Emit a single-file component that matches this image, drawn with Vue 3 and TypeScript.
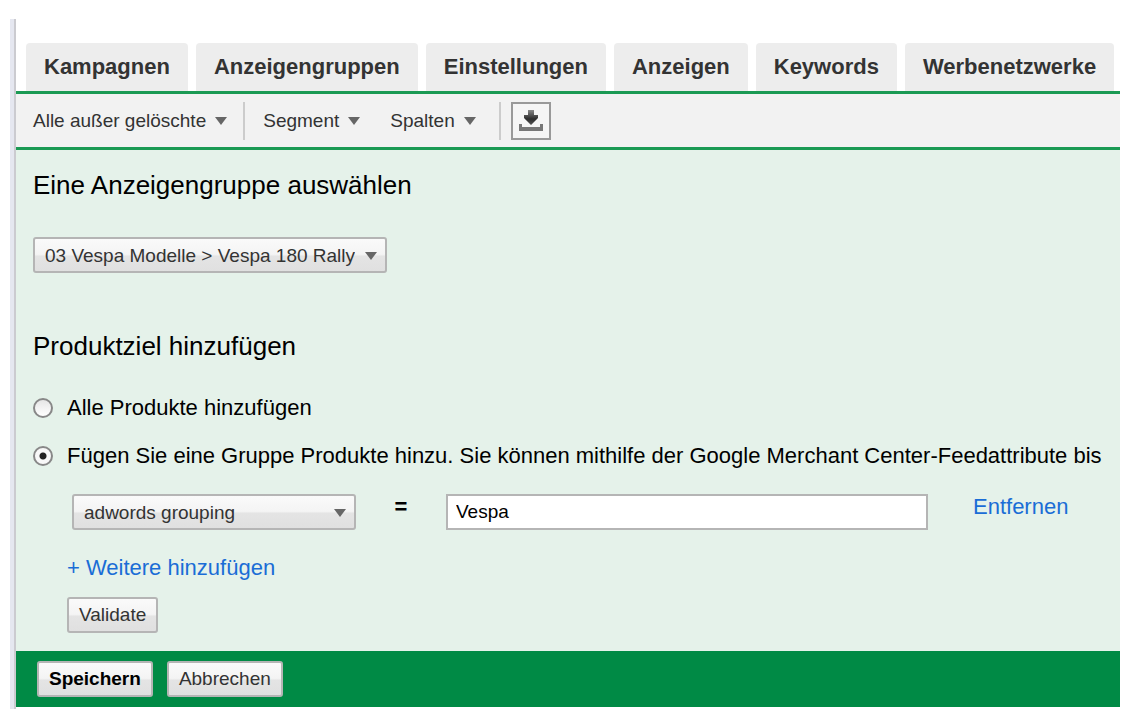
<script setup lang="ts">
import { ref } from 'vue'

const tabs: string[] = ['Kampagnen', 'Anzeigengruppen', 'Einstellungen', 'Anzeigen', 'Keywords', 'Werbenetzwerke']
const filters: string[] = ['Alle außer gelöschte', 'Segment', 'Spalten']
const scope = ref<'all' | 'group'>('group')
const adGroup = ref('03 Vespa Modelle > Vespa 180 Rally')
const attribute = ref('adwords grouping')
const attributeValue = ref('Vespa')
</script>

<template>
  <main class="frame">
    <nav class="tabs" aria-label="Kampagnenbereiche">
      <button v-for="tab in tabs" :key="tab" type="button" class="tab">{{ tab }}</button>
    </nav>

    <div class="toolbar">
      <button v-for="(item, i) in filters" :key="item" type="button" class="menu" :class="{ divided: i !== 1 }">
        {{ item }}<span class="caret"></span>
      </button>
      <button type="button" class="download" aria-label="Herunterladen">
        <svg width="26" height="24" viewBox="0 0 26 24" aria-hidden="true">
          <defs>
            <linearGradient id="arrowFill" x1="0" y1="0" x2="0" y2="1">
              <stop offset="0" stop-color="#888" />
              <stop offset="0.6" stop-color="#2c2c2c" />
              <stop offset="1" stop-color="#555" />
            </linearGradient>
          </defs>
          <path d="M10 1h6v5h4v3l-7 7-7-7V6h4z" fill="url(#arrowFill)" />
          <path d="M1 15h3v3h18v-3h3v7H1z" fill="#777" />
        </svg>
      </button>
    </div>

    <form class="panel" @submit.prevent>
      <div class="content">
        <h2><label for="adgroup">Eine Anzeigengruppe auswählen</label></h2>
        <div class="select group-select">
          <select id="adgroup" v-model="adGroup">
            <option>03 Vespa Modelle &gt; Vespa 180 Rally</option>
          </select>
        </div>

        <h2>Produktziel hinzufügen</h2>
        <div class="choices">
          <label class="choice">
            <input v-model="scope" type="radio" name="scope" value="all" />
            <span>Alle Produkte hinzufügen</span>
          </label>
          <label class="choice">
            <input v-model="scope" type="radio" name="scope" value="group" />
            <span>Fügen Sie eine Gruppe Produkte hinzu. Sie können mithilfe der Google Merchant Center-Feedattribute bis</span>
          </label>
        </div>

        <div class="details">
          <div class="condition">
            <div class="select attribute-select">
              <select v-model="attribute" aria-label="Attribut">
                <option>adwords grouping</option>
              </select>
            </div>
            <span class="equals">=</span>
            <input v-model="attributeValue" class="value" type="text" aria-label="Wert" />
            <a href="#" class="remove">Entfernen</a>
          </div>
          <a href="#" class="more">+ Weitere hinzufügen</a>
          <button type="button" class="btn validate">Validate</button>
        </div>
      </div>

      <footer class="actions">
        <button type="submit" class="btn primary">Speichern</button>
        <button type="button" class="btn">Abbrechen</button>
      </footer>
    </form>
  </main>
</template>

<style>
body {
  margin: 0;
  background: #fff;
}
</style>

<style scoped>
.frame,
.frame * {
  box-sizing: border-box;
}
.frame {
  margin: 19px 21px 0 10px;
  padding: 24px 0 2px 2px;
  border-left: 4px solid #e5e7f0;
  box-shadow: inset 2px 0 #cbcbd0;
  overflow: hidden;
  white-space: nowrap;
  font-family: "Liberation Sans", Arial, sans-serif;
  font-size: 22px;
  line-height: 26px;
  color: #000;
}
button,
select,
input {
  margin: 0;
  font-family: inherit;
}
.tabs {
  display: flex;
  gap: 8px;
  padding-left: 10px;
  border-bottom: 3px solid #1b9a54;
}
.tab {
  height: 48px;
  padding: 0 18px;
  border: 0;
  border-radius: 4px 4px 0 0;
  background: #ededed;
  color: #333;
  font-size: 22px;
  font-weight: bold;
}
.toolbar {
  display: flex;
  align-items: center;
  height: 56px;
  padding-left: 17px;
  border-bottom: 3px solid #1b9a54;
  background: #f2f2f2;
}
.menu {
  display: flex;
  align-items: center;
  gap: 9px;
  height: 38px;
  padding: 0;
  margin-right: 30px;
  border: 0;
  background: none;
  color: #333;
  font-size: 19px;
}
.menu.divided {
  padding-right: 16px;
  margin-right: 18px;
  border-right: 2px solid #ccc;
}
.menu.divided:nth-child(3) {
  padding-right: 23px;
  margin-right: 10px;
}
.caret,
.select::after {
  border: 6px solid transparent;
  border-top: 8px solid #666;
  border-bottom: 0;
}
.download {
  display: grid;
  place-items: center;
  width: 40px;
  height: 38px;
  padding: 0;
  border: 2px solid #999;
  background: #f5f5f5;
}
.content {
  display: flex;
  flex-direction: column;
  align-items: flex-start;
  padding: 20px 0 18px 17px;
  background: #e5f2ea;
}
h2 {
  margin: 0;
  font-size: 26px;
  font-weight: normal;
  line-height: 30px;
}
.select {
  position: relative;
}
.select::after {
  content: "";
  position: absolute;
  right: 10px;
  top: 15px;
  pointer-events: none;
}
.select select,
.btn {
  border: 2px solid #b5b5b5;
  border-radius: 3px;
  background: linear-gradient(#fafafa 0%, #f4f4f4 48%, #e4e4e4 54%, #e0e0e0 100%);
  color: #333;
  font-size: 19px;
}
.select select {
  display: block;
  width: 100%;
  height: 36px;
  padding: 0 30px 0 10px;
  appearance: none;
}
.group-select {
  width: 354px;
  margin: 37px 0 58px;
}
.choices {
  display: grid;
  gap: 22px;
  margin-top: 34px;
}
.choice {
  display: flex;
  align-items: center;
  gap: 14px;
}
.choice input {
  flex: none;
  width: 20px;
  height: 20px;
  border: 2px solid #888;
  border-radius: 50%;
  background: linear-gradient(#e6e6e6, #fff);
  appearance: none;
}
.choice input:checked {
  background: radial-gradient(circle, #222 3px, #f8f8f8 4px);
}
.details {
  display: flex;
  flex-direction: column;
  align-items: flex-start;
  align-self: stretch;
  padding: 25px 0 0 34px;
}
.condition {
  display: flex;
  align-self: stretch;
  padding-left: 5px;
}
.attribute-select {
  width: 284px;
}
.equals {
  width: 90px;
  text-align: center;
  font-weight: bold;
}
.value {
  flex: 1;
  min-width: 0;
  height: 36px;
  padding: 0 8px;
  border: 2px solid #b5b5b5;
  background: #fff;
  font-size: 19px;
}
a {
  color: #1a6dd6;
  text-decoration: none;
}
.remove {
  width: 192px;
  padding-left: 45px;
}
.more {
  margin-top: 25px;
}
.btn {
  height: 36px;
  padding: 0 10px;
}
.validate {
  margin-top: 16px;
}
.actions {
  display: flex;
  gap: 14px;
  padding: 10px 21px;
  background: #008a45;
}
.primary {
  color: #000;
  font-weight: bold;
}
</style>
